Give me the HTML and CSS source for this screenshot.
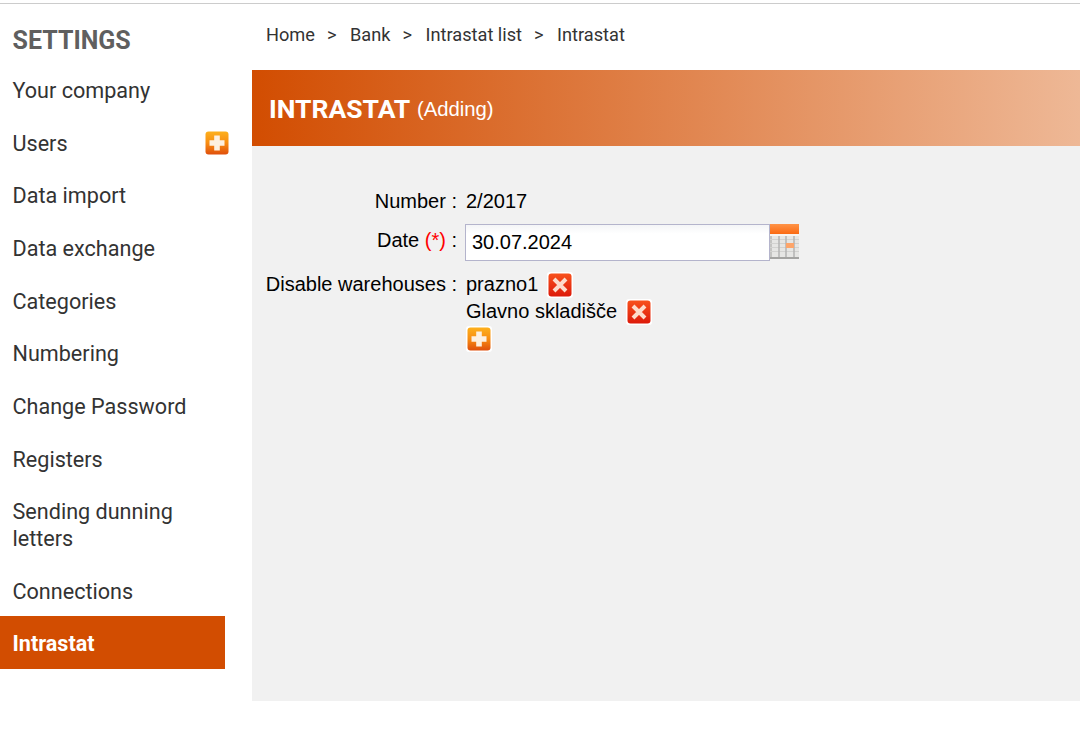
FILE: index.html
```html
<!DOCTYPE html>
<html lang="en">
<head>
    <meta charset="UTF-8">
    <title>Intrastat</title>
    <link rel="stylesheet" href="styles.css">
</head>
<body>
    <svg class="defs" width="0" height="0" aria-hidden="true">
        <defs>
            <linearGradient id="addFill" x1="0" y1="0" x2="0" y2="1">
                <stop offset="0" stop-color="#fdb01c"/>
                <stop offset="0.5" stop-color="#f88d12"/>
                <stop offset="1" stop-color="#df4f0c"/>
            </linearGradient>
            <linearGradient id="delFill" x1="0" y1="0" x2="0" y2="1">
                <stop offset="0" stop-color="#f8511c"/>
                <stop offset="1" stop-color="#dd1a0a"/>
            </linearGradient>
            <symbol id="iconAdd" viewBox="0 0 26 26">
                <rect x="0" y="0" width="26" height="26" rx="3" fill="#fff"/>
                <rect x="1.5" y="1.5" width="23" height="23" rx="3" fill="url(#addFill)"/>
                <path d="M10.2 5.5h5.6v4.7h4.7v5.6h-4.7v4.7h-5.6v-4.7H5.5v-5.6h4.7z" fill="#fdf0e0"/>
            </symbol>
            <symbol id="iconDel" viewBox="0 0 26 26">
                <rect x="0" y="0" width="26" height="26" rx="3" fill="#fff"/>
                <rect x="1.5" y="1.5" width="23" height="23" rx="3" fill="url(#delFill)"/>
                <path d="M7 7l12 12M19 7L7 19" stroke="#fddccb" stroke-width="4" fill="none"/>
            </symbol>
        </defs>
    </svg>

    <div class="page">
        <aside class="sidebar">
            <h2 class="sidebar-title">SETTINGS</h2>
            <nav class="side-menu">
                <a class="side-item">Your company</a>
                <a class="side-item">Users <svg class="icon icon-users"><use href="#iconAdd"/></svg></a>
                <a class="side-item">Data import</a>
                <a class="side-item">Data exchange</a>
                <a class="side-item">Categories</a>
                <a class="side-item">Numbering</a>
                <a class="side-item">Change Password</a>
                <a class="side-item">Registers</a>
                <a class="side-item">Sending dunning letters</a>
                <a class="side-item">Connections</a>
                <a class="side-item active">Intrastat</a>
            </nav>
        </aside>

        <main class="content">
            <div class="breadcrumbs">
                <a>Home</a><span class="sep">&gt;</span>
                <a>Bank</a><span class="sep">&gt;</span>
                <a>Intrastat list</a><span class="sep">&gt;</span>
                <a>Intrastat</a>
            </div>
            <header class="banner">
                <strong>INTRASTAT</strong> <span class="banner-mode">(Adding)</span>
            </header>
            <section class="panel">
                <div class="form-row row-number">
                    <div class="form-label">Number :</div>
                    <div class="form-value">2/2017</div>
                </div>
                <div class="form-row row-date">
                    <div class="form-label">Date <span class="required">(*)</span> :</div>
                    <div class="form-value date-field">
                        <input class="date-input" type="text" value="30.07.2024">
                        <svg class="calendar" viewBox="0 0 29 35" aria-hidden="true">
                            <defs>
                                <linearGradient id="calTop" x1="0" y1="0" x2="0" y2="1">
                                    <stop offset="0" stop-color="#ff9448"/>
                                    <stop offset="1" stop-color="#fb6a12"/>
                                </linearGradient>
                            </defs>
                            <rect width="29" height="35" fill="#e6e6e4"/>
                            <rect width="29" height="10" fill="url(#calTop)"/>
                            <rect y="10" width="29" height="2" fill="#f7f4f0"/>
                            <rect y="12" width="2" height="21" fill="#c4c4c2"/>
                            <path d="M0 15.5h29M0 19.5h29M0 23.5h29M0 27.5h29" stroke="#d2d2d0"/>
                            <path d="M9 12v21M16 12v21M24 12v21" stroke="#b4b4b2" stroke-width="1.5"/>
                            <rect x="16" y="19" width="8" height="5" fill="#fda56a"/>
                            <rect y="33" width="29" height="2" fill="#a4a4a2"/>
                        </svg>
                    </div>
                </div>
                <div class="form-row row-warehouses">
                    <div class="form-label">Disable warehouses :</div>
                    <div class="form-value">
                        <div class="wh-line">prazno1 <svg class="icon"><use href="#iconDel"/></svg></div>
                        <div class="wh-line">Glavno skladišče <svg class="icon"><use href="#iconDel"/></svg></div>
                        <div class="wh-line"><svg class="icon"><use href="#iconAdd"/></svg></div>
                    </div>
                </div>
            </section>
        </main>
    </div>
</body>
</html>
```

FILE: styles.css
```css
html, body {
    margin: 0;
    overflow: hidden;
    background-color: #fff;
}
body {
    border-top: 1px solid #ccc;
    margin-top: 3px;
    height: 730px;
    font-family: "Liberation Sans", Arial, sans-serif;
}
.defs {
    display: block;
    height: 0;
}
.page {
    display: flex;
    height: 697px;
}

/* left menu */
.sidebar {
    width: 252px;
    flex: none;
    font-family: Roboto, sans-serif;
}
.sidebar-title {
    margin: 0;
    padding: 22px 0 0 12.5px;
    height: 37px;
    font-size: 25px;
    line-height: 30px;
    font-weight: 700;
    color: #5f5f5f;
}
.side-menu {
    width: 225px;
    display: flex;
    flex-direction: column;
    margin-top: 2px;
}
.side-item {
    position: relative;
    display: block;
    padding: 13px 30px 13px 12.5px;
    font-size: 21.6px;
    line-height: 26.65px;
    color: #333;
}
.side-item.active {
    margin-top: -2.5px;
    padding-top: 15px;
    padding-bottom: 11.4px;
    background-color: #d24d01;
    color: #fff;
    font-weight: 700;
}

/* right side */
.content {
    flex: 1;
    display: flex;
    flex-direction: column;
}
.breadcrumbs {
    height: 66px;
    box-sizing: border-box;
    padding: 18px 0 0 14px;
    font-family: Roboto, sans-serif;
    font-size: 18.2px;
    line-height: 26px;
    color: #333;
}
.sep {
    margin: 0 9px 0 12px;
}
.banner {
    height: 76px;
    box-sizing: border-box;
    padding: 21px 0 0 17px;
    background: linear-gradient(to right, #d24d01, #eeb896);
    color: #fff;
    font-size: 20.3px;
    line-height: 34px;
}
.banner strong {
    position: relative;
    top: 1px;
    font-family: Roboto, sans-serif;
    font-size: 26.5px;
}
.banner-mode {
    position: relative;
    top: -1px;
    margin-left: 1px;
}
.panel {
    flex: 1;
    background-color: #f1f1f1;
    padding-top: 42px;
    font-size: 20px;
    color: #000;
}

/* form */
.form-row {
    display: flex;
    line-height: 26px;
}
.form-label {
    width: 205px;
    text-align: right;
    flex: none;
}
.form-value {
    margin-left: 9px;
}
.required {
    color: #f00;
}
.row-date {
    margin-top: 13px;
}
.row-warehouses {
    margin-top: 10px;
}
.date-field {
    display: flex;
    margin-left: 8px;
    margin-top: -3px;
}
.date-input {
    width: 305px;
    height: 37px;
    box-sizing: border-box;
    border: 1px solid #b4b4cc;
    padding: 1px 6px;
    font-family: "Liberation Sans", Arial, sans-serif;
    font-size: 20px;
    color: #000;
    background: linear-gradient(to bottom, #f4f5f7, #fff 25%);
}
.calendar {
    width: 29px;
    height: 35px;
}
.wh-line {
    height: 27px;
    display: flex;
    gap: 9px;
    align-items: flex-start;
}
.icon {
    width: 26px;
    height: 26px;
    flex: none;
    margin-top: 1px;
}
.icon-users {
    position: absolute;
    right: -5px;
    top: 11px;
}
```
